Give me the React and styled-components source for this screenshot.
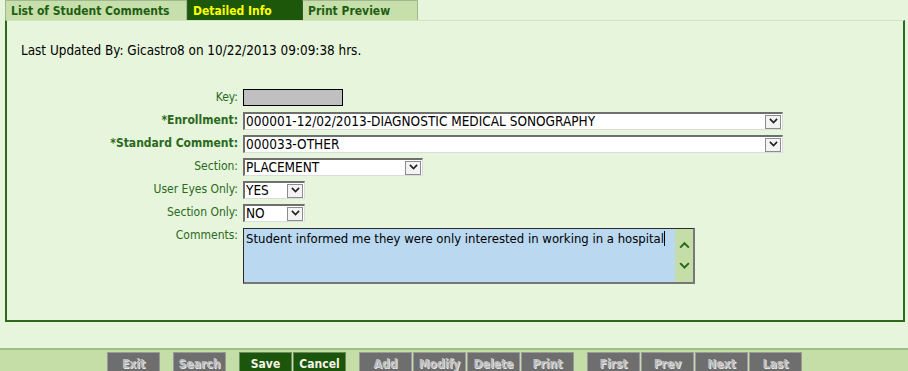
import styled, { createGlobalStyle } from 'styled-components';

const GlobalStyle = createGlobalStyle`
  html, body {
    margin: 0;
    padding: 0;
    background: #e6f5dc;
    overflow: hidden;
  }
  body {
    font-family: "DejaVu Sans Condensed", "Liberation Sans", sans-serif;
    font-size: 12px;
    color: #000;
  }
`

const Page = styled.div`
  width: 908px;
  height: 371px;
  display: flex;
  flex-direction: column;
  overflow: hidden;
`

const TabBar = styled.div`
  display: flex;
  flex-shrink: 0;
  height: 20px;
  padding-left: 5px;
`

const Tab = styled.div`
  height: 20px;
  box-sizing: border-box;
  padding: 3px 0 0 5px;
  width: ${p => p.w}px;
  font-weight: bold;
  font-size: 12px;
  background: ${p => (p.active ? '#1c570a' : '#c6dfab')};
  color: ${p => (p.active ? '#ffff00' : '#1f5e12')};
  border: 1px solid ${p => (p.active ? '#1c570a' : '#9fb88f')};
  border-bottom: none;
  & + & {
    border-left: 1px solid #2f5f22;
  }
`

const Panel = styled.div`
  flex-shrink: 0;
  margin-left: 5px;
  width: 900px;
  height: 302px;
  box-sizing: border-box;
  border: 2px solid #2b6a1b;
  border-top: 1px solid #cfe5bd;
  padding-top: 21px;
`

const Updated = styled.div`
  padding-left: 14px;
  height: 17px;
  line-height: 17px;
  font-size: 13.4px;
`

const Form = styled.div`
  margin-top: 30px;
  display: grid;
  grid-template-columns: 231px auto;
  column-gap: 5px;
  row-gap: 6px;
  grid-auto-rows: 17px;
  align-items: start;
`

const Label = styled.div`
  text-align: right;
  color: #2a6a1c;
  line-height: 17px;
  white-space: nowrap;
  font-weight: ${p => (p.required ? 'bold' : 'normal')};
  font-size: 12px;
`

const KeyBox = styled.div`
  width: 100px;
  height: 17px;
  box-sizing: border-box;
  background: #c0c0c0;
  border: 1px solid #000;
`

const SelectBox = styled.div`
  width: ${p => p.w}px;
  height: 18px;
  box-sizing: border-box;
  display: flex;
  align-items: center;
  background: #fff;
  border-top: 2px solid #6f6f6f;
  border-left: 2px solid #6f6f6f;
  border-right: 1px solid #dcdcdc;
  border-bottom: 1px solid #dcdcdc;
  padding-left: 1px;
`

const SelectText = styled.span`
  flex: 1;
  font-size: 13.5px;
  line-height: 15px;
  white-space: nowrap;
  overflow: hidden;
`

const Arrow = styled.span`
  width: 16px;
  height: 14px;
  box-sizing: border-box;
  margin-right: 1px;
  border: 1px solid #8c8c8c;
  background: #f3f3f3;
  display: flex;
  align-items: center;
  justify-content: center;
`

const TextArea = styled.div`
  grid-row: span 3;
  width: 452px;
  height: 56px;
  box-sizing: border-box;
  display: flex;
  border-top: 1px solid #2a2a2a;
  border-left: 1px solid #2a2a2a;
  border-right: 2px solid #777;
  border-bottom: 2px solid #777;
  background: #bad8f0;
  margin-top: 1px;
`

const AreaText = styled.div`
  flex: 1;
  padding: 2px 0 0 2px;
  font-size: 13px;
  line-height: 16px;
  white-space: nowrap;
`

const Caret = styled.span`
  display: inline-block;
  width: 1px;
  height: 15px;
  background: #000;
  vertical-align: -3px;
`

const Scroll = styled.div`
  width: 18px;
  background: #c5dea9;
  display: flex;
  flex-direction: column;
  align-items: center;
  justify-content: center;
  gap: 13px;
`

const Toolbar = styled.div`
  margin-top: 26px;
  flex: 1;
  background: #c5dea8;
  border-top: 2px solid #9dbf86;
  display: flex;
  padding: 2px 0 0 107px;
`

const Group = styled.div`
  display: flex;
  gap: 1px;
  margin-right: ${p => p.gap}px;
`

const Btn = styled.div`
  width: 53px;
  height: 22px;
  box-sizing: border-box;
  font-weight: bold;
  font-size: 12px;
  text-align: center;
  padding-top: 4px;
  background: ${p => (p.on ? '#1c560b' : '#6e6e6e')};
  border: 1px solid ${p => (p.on ? '#6c8a5e' : '#9a9a9a')};
  border-bottom: none;
  color: ${p => (p.on ? '#f4f4e8' : '#bcbcbc')};
  text-shadow: ${p => (p.on ? 'none' : '1px 1px 0 #e6e6e6')};
`

const Chevron = ({ up, color = '#222', size = 10 }) => (
  <svg width={size} height={size * 0.7} viewBox="0 0 10 7">
    <path d={up ? 'M1 6 L5 2 L9 6' : 'M1 1 L5 5 L9 1'} fill="none" stroke={color} strokeWidth="1.8" />
  </svg>
)

const Select = ({ w, value }) => (
  <SelectBox w={w}>
    <SelectText>{value}</SelectText>
    <Arrow>
      <Chevron size={9} />
    </Arrow>
  </SelectBox>
)

const groups = [
  { gap: 13, items: [['Exit']] },
  { gap: 13, items: [['Search']] },
  { gap: 13, items: [['Save', true], ['Cancel', true]] },
  { gap: 13, items: [['Add'], ['Modify'], ['Delete'], ['Print']] },
  { gap: 0, items: [['First'], ['Prev'], ['Next'], ['Last']] },
]

export default function App() {
  return (
    <Page>
      <GlobalStyle />
      <TabBar>
        <Tab w={182}>List of Student Comments</Tab>
        <Tab w={115} active>Detailed Info</Tab>
        <Tab w={116}>Print Preview</Tab>
      </TabBar>
      <Panel>
        <Updated>Last Updated By: Gicastro8 on 10/22/2013 09:09:38 hrs.</Updated>
        <Form>
          <Label>Key:</Label>
          <KeyBox />
          <Label required>*Enrollment:</Label>
          <Select w={540} value="000001-12/02/2013-DIAGNOSTIC MEDICAL SONOGRAPHY" />
          <Label required>*Standard Comment:</Label>
          <Select w={540} value="000033-OTHER" />
          <Label>Section:</Label>
          <Select w={180} value="PLACEMENT" />
          <Label>User Eyes Only:</Label>
          <Select w={62} value="YES" />
          <Label>Section Only:</Label>
          <Select w={62} value="NO" />
          <Label>Comments:</Label>
          <TextArea>
            <AreaText>
              Student informed me they were only interested in working in a hospital<Caret />
            </AreaText>
            <Scroll>
              <Chevron up color="#2b6a1b" size={11} />
              <Chevron color="#2b6a1b" size={11} />
            </Scroll>
          </TextArea>
        </Form>
      </Panel>
      <Toolbar>
        {groups.map((g, i) => (
          <Group key={i} gap={g.gap}>
            {g.items.map(([t, on]) => (
              <Btn key={t} on={on}>{t}</Btn>
            ))}
          </Group>
        ))}
      </Toolbar>
    </Page>
  );
}
